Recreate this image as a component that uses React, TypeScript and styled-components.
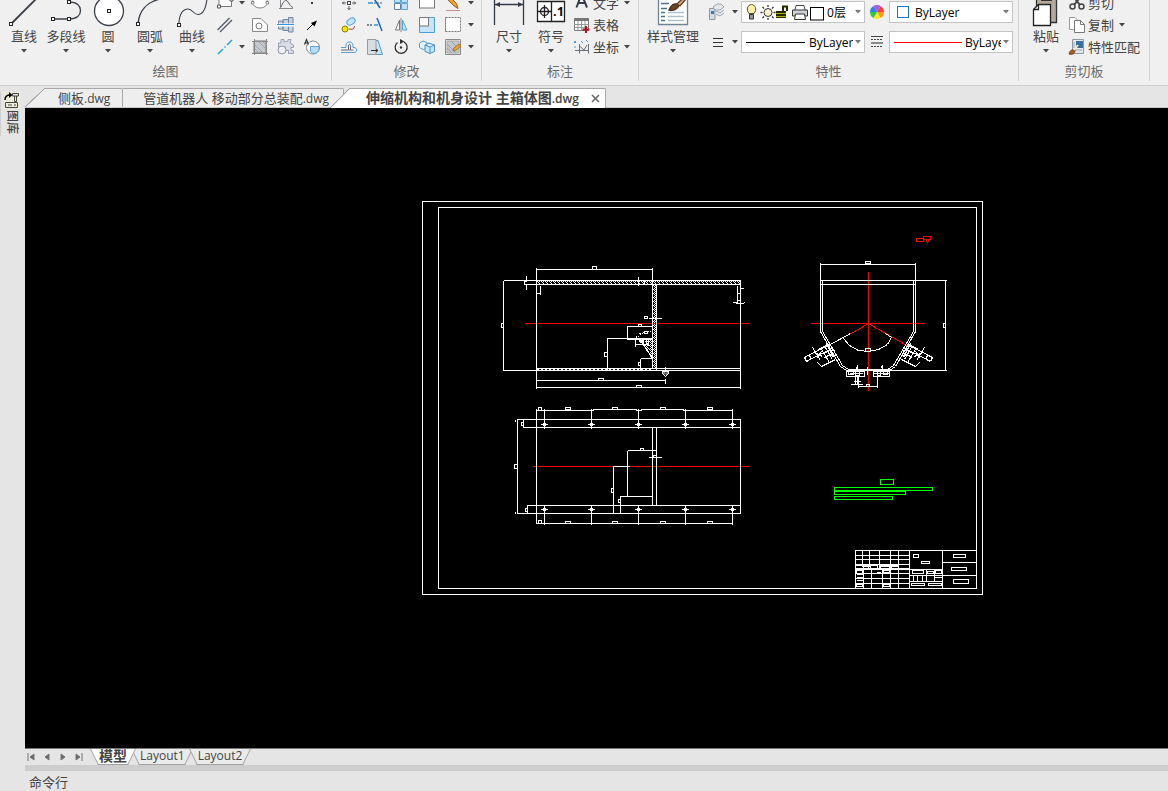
import React from "react";
import styled, { createGlobalStyle, css } from "styled-components";

const GlobalStyle = createGlobalStyle`
  * { box-sizing: border-box; }
  body { margin: 0; background: #e5e5e5; }
  body, button, select, input {
    font-family: "Open Sans", "Noto Sans CJK SC", sans-serif;
    font-size: 13px;
    color: #444;
  }
  button { border: 0; padding: 0; background: none; }
  svg { display: block; flex: none; }
`;

/* ---------- page frame ---------- */

const Page = styled.div`
  display: flex;
  flex-direction: column;
  min-height: 100vh;
`;

const Ribbon = styled.header`
  display: flex;
  padding-bottom: 4px;
  background: #f0f0f0;
  border-bottom: 1px solid #cfcfcf;
  overflow: hidden;
`;

const GroupBox = styled.section`
  display: flex;
  flex-direction: column;
  flex: none;
  border-right: 1px solid #d2d2d2;
`;

const GroupBody = styled.div<{ $left: number; $right: number }>`
  display: flex;
  height: 63px;
  padding: 0 ${(p) => p.$right}px 0 ${(p) => p.$left}px;
`;

const GroupTitle = styled.h2`
  margin: 0;
  padding-bottom: 2px;
  font-size: 13px;
  font-weight: 400;
  line-height: 16px;
  text-align: center;
  color: #6a6a6a;
`;

const BigButton = styled.button<{ $wide?: boolean }>`
  display: flex;
  flex-direction: column;
  align-items: center;
  width: ${(p) => (p.$wide ? 60 : 42)}px;
  height: 58px;
  line-height: 18px;
  white-space: nowrap;
`;

const CaretBox = styled.span`
  display: flex;
  align-items: center;
  justify-content: center;
  width: 10px;
  height: 12px;
`;

const ToolGrid = styled.div<{ $cols: string }>`
  display: grid;
  grid-template-columns: ${(p) => p.$cols};
  grid-auto-rows: 22px;
  align-items: center;
  margin-top: -8px;
`;

const ToolButton = styled.button`
  display: flex;
  align-items: center;
  justify-content: center;
  height: 22px;
`;

const ToolList = styled.div`
  display: flex;
  flex-direction: column;
  margin-top: -8px;
  padding-left: 1px;
`;

const ToolRow = styled.button`
  display: flex;
  align-items: center;
  gap: 2px;
  height: 22px;
  line-height: 22px;
  white-space: nowrap;
`;

const RowCaret = styled.span`
  padding-left: 1px;
`;

const PropGrid = styled.div`
  display: grid;
  grid-template-columns: 26px 12px 124px 24px 124px;
  grid-auto-rows: 22px;
  row-gap: 8px;
  align-items: center;
  justify-items: center;
  padding-top: 1px;
`;

const Field = styled.label`
  display: flex;
  align-items: center;
  width: 100%;
  height: 22px;
  padding: 0 1px 0 4px;
  background: #fff;
  border: 1px solid #c3c3c3;
`;

const FieldSelect = styled.select`
  flex: 1;
  min-width: 0;
  height: 20px;
  padding: 0;
  margin-left: 3px;
  border: 0;
  appearance: none;
  background: none;
  font-size: 12px;
  color: #000;
`;

const Workspace = styled.div`
  display: flex;
  flex: 1;
`;

const Sidebar = styled.aside`
  width: 25px;
  flex: none;
  padding-top: 6px;
`;

const SideTab = styled.button`
  display: flex;
  flex-direction: column;
  align-items: center;
  gap: 1px;
  width: 23px;
  height: 44px;
  border-left: 1px solid #cfcfcf;
`;

const SideLabel = styled.span`
  writing-mode: vertical-rl;
  text-orientation: sideways;
  font-size: 12px;
  font-weight: 500;
  line-height: 16px;
`;

const Main = styled.main`
  display: flex;
  flex-direction: column;
  flex: 1;
  min-width: 0;
`;

/* ---------- document tabs ---------- */

const FileTabs = styled.nav`
  display: flex;
  align-items: flex-end;
  height: 22px;
  border-bottom: 1px solid #c8c8c8;
`;

const FileTab = styled.div<{ $active?: boolean; $slant?: boolean; $left: number; $right: number }>`
  --fill: ${(p) => (p.$active ? "#fff" : "#eee")};
  position: relative;
  display: flex;
  align-items: center;
  height: 19px;
  margin-left: ${(p) => (p.$active ? 6 : p.$slant ? 20 : 0)}px;
  padding: 0 ${(p) => p.$right}px 0 ${(p) => p.$left}px;
  background: var(--fill);
  border-top: 1px solid #a8a8a8;
  border-right: 1px solid #a8a8a8;
  border-top-right-radius: 2px;
  white-space: nowrap;
  ${(p) =>
    p.$active &&
    css`
      height: 20px;
      margin-bottom: -1px;
    `}
  ${(p) =>
    p.$slant &&
    css`
      &::before {
        content: "";
        position: absolute;
        right: 100%;
        top: -1px;
        bottom: 0;
        width: 20px;
        background: linear-gradient(to bottom right, transparent 48%, #a0a0a0 49%, #a0a0a0 51%, var(--fill) 53%);
      }
    `}
`;

const FileName = styled.button<{ $active?: boolean }>`
  font-size: ${(p) => (p.$active ? 14 : 13)}px;
  font-weight: ${(p) => (p.$active ? 700 : 400)};
  line-height: 18px;
`;

const Extension = styled.span<{ $active?: boolean }>`
  font-size: 12px;
  font-weight: ${(p) => (p.$active ? 600 : 400)};
`;

const CloseButton = styled.button`
  margin-left: 12px;
`;

/* ---------- drawing area and bottom bars ---------- */

const Canvas = styled.div`
  flex: 1;
  padding: 93px 0 0 397px;
  background: #000;
  overflow: hidden;
`;

const LayoutBar = styled.nav`
  display: flex;
  align-items: flex-start;
  height: 17px;
  border-top: 1px solid #777;
`;

const NavButton = styled.button`
  display: flex;
  align-items: center;
  width: 16px;
  height: 16px;
  padding-left: 2px;
`;

const LayoutTab = styled.button<{ $active?: boolean }>`
  --fill: ${(p) => (p.$active ? "#fff" : "#ebebeb")};
  position: relative;
  z-index: ${(p) => (p.$active ? 1 : 0)};
  height: 16px;
  padding: 0 7px 2px;
  line-height: 14px;
  margin-right: -1px;
  font-size: ${(p) => (p.$active ? 14 : 12)}px;
  font-weight: ${(p) => (p.$active ? 700 : 400)};
  &::before,
  &::after {
    content: "";
    position: absolute;
    z-index: -1;
    top: 0;
    bottom: 0;
    background: var(--fill);
    border-bottom: 1px solid #a0a0a0;
  }
  &::before {
    left: 2px;
    right: 40%;
    border-left: 1px solid #a0a0a0;
    transform: skewX(26deg);
  }
  &::after {
    left: 40%;
    right: 2px;
    border-right: 1px solid #a0a0a0;
    transform: skewX(-26deg);
  }
`;

const LayoutTabs = styled.div`
  display: flex;
  isolation: isolate;
  padding-left: 3px;
`;

const Splitter = styled.div`
  height: 6px;
  background: #cdcdcd;
`;

const CommandRow = styled.div`
  display: flex;
  align-items: center;
  height: 20px;
  padding-left: 4px;
`;

const CommandInput = styled.input`
  flex: 1;
  height: 18px;
  margin-left: 6px;
  border: 0;
  background: none;
  outline: none;
`;

/* ---------- icons ---------- */

const Caret = ({ color = "#444" }: { color?: string }) => (
  <CaretBox>
    <svg width="6" height="4" viewBox="0 0 6 4"><path d="M0 0H6L3 3.4Z" fill={color} /></svg>
  </CaretBox>
);

const Small = ({ children }: { children: React.ReactNode }) => (
  <svg width="18" height="20" viewBox="1 0 18 20" fill="none" stroke="#555c68">{children}</svg>
);

const Big = ({ children, w = 42 }: { children: React.ReactNode; w?: number }) => (
  <svg width={w} height="27" viewBox={`0 0 ${w} 27`} fill="none" stroke="#3a3f4a" strokeWidth="1.3">{children}</svg>
);

const Grip = ({ x, y }: { x: number; y: number }) => (
  <rect x={x - 1.5} y={y - 1.5} width="3" height="3" fill="#fff" stroke="#222" strokeWidth="1" />
);

const drawButtons = [
  { label: "直线", icon: <><path d="M8 24L33-1" strokeWidth="1.8" /><Grip x={8} y={24} /></> },
  { label: "多段线", icon: <><path d="M8 19H24C32 19 35.500 15 35.500 10.500S32 2 24 2" /><Grip x={8} y={19} /><Grip x={24} y={19} /><Grip x={24} y={2} /></> },
  { label: "圆", icon: <><circle cx="22" cy="11" r="14.500" fill="#fff" /><Grip x={22} y={11} /></> },
  { label: "圆弧", icon: <><path d="M9 24C10 11 18 2 31-1" strokeWidth="1.400" /><Grip x={9} y={24} /></> },
  { label: "曲线", icon: <><path d="M8 24C8 14 12 9 17 9C22 9 22 14.500 27 14.500C33 14.500 35 7 36-1" strokeWidth="1.100" /><Grip x={8} y={25} /></> },
];

const drawTools: { name: string; icon: React.ReactNode; caret?: boolean }[][] = [
  [
    { name: "矩形", caret: true, icon: <><path d="M4 1H16.500V13.500H4Z" fill="#fff" stroke="#777" /><path d="M2.500 12H5.500V15H2.500ZM15 5H18V8H15Z" fill="#fff" stroke="#555" /></> },
    { name: "椭圆", icon: <><ellipse cx="10" cy="9.500" rx="7.500" ry="5.500" fill="#fff" stroke="#888" /><path d="M1.500 8.500H4V11H1.500ZM16 8.500H18.500V11H16Z" fill="#fff" stroke="#888" /></> },
    { name: "函数", icon: <><path d="M4.500 2V15.500M3 15.500H17" stroke="#888" /><path d="M5 14C8 7 10 6 12 9S14 13 17 14.500" /></> },
    { name: "点", icon: <rect x="9" y="9" width="2" height="2" fill="#333" stroke="none" /> },
  ],
  [
    { name: "平行线", icon: <path d="M2.500 15L14.500 3M5 17L17 5" strokeWidth="1.400" /> },
    { name: "轮廓", icon: <><path d="M2.500 3.500H11L17.500 10V16.500H2.500Z" fill="#fff" stroke="#888" /><circle cx="9" cy="11" r="3" stroke="#777" /></> },
    { name: "轴", icon: <><path d="M2.500 6H7V14H2.500ZM7 4.500H12.500V15.500H7ZM12.500 2.500H17V17H12.500Z" fill="#c5cfdc" stroke="#7588a0" /><path d="M2 8.500H18V11.500H2Z" fill="#fff" stroke="none" /><path d="M1 9.500H18" stroke="#2f95e8" /></> },
    { name: "箭头", icon: <><path d="M5 15L11 9" stroke="#000" /><path d="M9 8L15 5.500L12.500 11.500Z" stroke="none" fill="#000" /></> },
  ],
  [
    { name: "中心线", caret: true, icon: <path d="M3 17L8 12M9.500 10.500L10.500 9.500M12 8L17 3" stroke="#2aa3e6" strokeWidth="1.500" /> },
    { name: "图案填充", icon: <><path d="M4 4H16V16H4Z" fill="#c6cace" stroke="#777" /><path d="M4 7L13 16M4 11L9 16M8 4L16 12M12 4L16 8" stroke="#a0a8b0" /><path d="M2 4.500H18M2 16.500H18M4.500 2V18M16.500 2V18" stroke="#888" /></> },
    { name: "零件", icon: <><path d="M5 2.500H8V5L12 4V2.500H15L14 6L17.500 8V10.500H15V13L17.500 14V16.500H12.500V13.500H9.500V10H2.500V6H5Z" fill="#d9dee6" stroke="#9aa3b0" /><circle cx="6" cy="13" r="4" fill="#eef0f3" stroke="#8d96a3" /></> },
    { name: "局部放大", icon: <><circle cx="11" cy="10.500" r="6.500" fill="#fff" stroke="#888" /><path d="M8.500 9.500H17V12C17 14 15 16.500 12 16.500C9.500 16.500 8.500 15 8.500 13Z" fill="#b5dcf8" stroke="#5ba3d8" /><path d="M2.500 7.500L4.500 2.500L6.500 7.500M3 6H6" stroke="#333" strokeWidth="1.200" /></> },
  ],
];

const modifyTools: { name: string; icon: React.ReactNode }[][] = [
  [
    { name: "移动", icon: <><path d="M10 3V17M3 10H17M8.500 15L10 16.500L11.500 15M5 8.500L3.500 10L5 11.500M15 8.500L16.500 10L15 11.500" /><path d="M7 7H13V13H7Z" fill="#f0f0f0" stroke="none" /><rect x="8.500" y="8.500" width="3" height="3" fill="#f0f0f0" stroke="#444" /></> },
    { name: "修剪", icon: <><path d="M3 10H8" stroke="#2f95e8" strokeWidth="1.500" /><path d="M9 10H18" strokeDasharray="2 1" /><path d="M8 4L15 15" stroke="#1668b0" strokeWidth="1.500" /></> },
    { name: "阵列", icon: <><path d="M3.500 3.500H9.500V9.500H3.500ZM10.500 3.500H16.500V9.500H10.500ZM10.500 10.500H16.500V16.500H10.500Z" fill="#bfe3fa" stroke="#5aa6d6" /><path d="M3.500 10.500H9.500V16.500H3.500Z" fill="#fff" stroke="#5a86a6" /></> },
    { name: "面", icon: <rect x="2.500" y="1" width="15" height="14" fill="#fff" stroke="#777" /> },
    { name: "编辑", icon: <><path d="M3 5L11 13L15 15.500L13.500 10.500L6 3Z" fill="#f0a030" stroke="#9a6520" /><path d="M3 17.500H17" stroke="#c58c88" /></> },
  ],
  [
    { name: "复制", icon: <><circle cx="6" cy="14" r="3" fill="#f5e600" stroke="#8a8000" /><ellipse cx="12" cy="6.500" rx="4.500" ry="3" transform="rotate(-35 12 6.500)" fill="#c9e7fa" stroke="#4c9fd6" /><path d="M10 14C15 15 15 13 15.500 11" stroke="#b03030" /></> },
    { name: "打断", icon: <><path d="M2 10H8" strokeDasharray="2 1" strokeWidth="1.500" /><path d="M9 10H13" stroke="#2f95e8" strokeWidth="1.500" /><path d="M12 3L17 16" stroke="#1668b0" strokeWidth="1.500" /></> },
    { name: "镜像", icon: <><path d="M8.500 5V15H4.500Z" fill="#fff" stroke="#777" /><path d="M11.500 5V15H16Z" fill="#bfe3fa" stroke="#5aa6d6" /><path d="M10 3V17" stroke="#888" /></> },
    { name: "缩放", icon: <><path d="M2.500 2.500H17.500V17.500H2.500Z" fill="#c5e5fa" stroke="#4c9fd6" /><path d="M2.500 2.500H11.500V11H2.500Z" fill="#fff" stroke="#777" /></> },
    { name: "选择框", icon: <><rect x="2.500" y="2.500" width="15" height="14" fill="#fff" stroke="#777" strokeDasharray="2 1" /><path d="M2.500 3V17" stroke="#4c9fd6" strokeDasharray="2 1" /></> },
  ],
  [
    { name: "偏移", icon: <><path d="M2 15.500H15C18.500 15.500 18.500 10.500 15 10.500H14V8C14 4 7 4 7 8V10.500H2" stroke="#5d9ed0" /><path d="M2 13H14.500M9.500 12.500V8.500C9.500 7 11.500 7 11.500 8.500V12.500" stroke="#667" /></> },
    { name: "拉伸", icon: <><path d="M10 3.500L13 3.500L17.500 17.500H10" fill="#c5e5fa" stroke="#4c9fd6" /><path d="M2.500 2.500H11V17.500H2.500Z" fill="#d9dce0" stroke="#999" /><path d="M6 13.500H13M11 12L13 13.500L11 15" stroke="#333" /></> },
    { name: "旋转", icon: <><path d="M6.500 5.500A6 6 0 1 0 13 5" stroke="#333" strokeWidth="1.300" /><path d="M9 2L13.500 4.500L9 7Z" fill="#333" stroke="none" /><circle cx="10" cy="10.500" r="1.200" fill="#333" stroke="none" /></> },
    { name: "三维阵列", icon: <><path d="M2.500 6L6 4L10 5.500V11L6 12.500L2.500 10.500Z" fill="#e3f2fc" stroke="#5a9fce" /><path d="M8 8L12 6L17.500 8V14.500L13 16.500L8 14.500ZM8 8L13 10L17.500 8M13 10V16.500" fill="#c5e5fa" stroke="#4c8fc6" /></> },
    { name: "编辑填充", icon: <><path d="M4 4H16V16H4Z" fill="#c3c6ca" stroke="#aaa" /><path d="M4 7L13 16M4 11L9 16M8 4L16 12" stroke="#9aa0a8" /><path d="M2.500 2.500H17.500V17.500H2.500Z" stroke="#888" /><path d="M10 14L11 11L16 7L18 9L13 13Z" fill="#eba83a" stroke="#a87522" /></> },
  ],
];

const annotateRows = [
  { label: "文字", caret: true, icon: <path d="M4.500 14.500L9.500 1L15 14.500M6.500 10H13" stroke="#333a48" strokeWidth="2" /> },
  { label: "表格", icon: <><path d="M2.500 3.500H16.500V15.500H2.500Z" fill="#fff" stroke="#777" /><path d="M2.500 3H16.500V6H2.500Z" fill="#777" stroke="none" /><path d="M2.500 9.500H16.500M2.500 12.500H16.500M6 6V15.500M9.500 6V15.500M13 6V15.500" stroke="#999" /><path d="M14 11V18M10.500 14.500H17.500" stroke="#b01020" strokeWidth="2" /></> },
  { label: "坐标", caret: true, icon: <><path d="M7.500 7V16.500M16.500 7V16.500M3 13.500H17M7.500 9L12 13L15 8" stroke="#68707c" /><path d="M2 4L4 6M4 4L2 6M9 4L11 6M14 3L16 5M3 9V11" stroke="#4c9fd6" /></> },
];

const clipboardRows = [
  { label: "剪切", icon: <><path d="M5 2L13 12M15 2L7 12" stroke="#444" strokeWidth="2" /><circle cx="5.500" cy="13.500" r="2.500" stroke="#444" strokeWidth="1.500" /><circle cx="14.500" cy="13.500" r="2.500" stroke="#444" strokeWidth="1.500" /></> },
  { label: "复制", caret: true, icon: <><path d="M2.500 2.500H8L11 5.500V14.500H2.500Z" fill="#fff" stroke="#999" /><path d="M7.500 5.500H13.500L17.500 9.500V17.500H7.500Z" fill="#fff" stroke="#777" /><path d="M13.500 5.500V9.500H17.500" stroke="#777" /></> },
  { label: "特性匹配", icon: <><path d="M5.500 2.500H16.500V16.500H5.500Z" fill="#e5e9ed" stroke="#8999a6" /><path d="M9 4H16V11H9Z" fill="#386f9e" stroke="none" /><path d="M7 13H15M7 5V11" stroke="#9aabbb" /><path d="M2 17C3 12 6 13 8 13C8 17 5 18 2 17Z" fill="#a75b1c" stroke="#7d4819" /><path d="M7 13L11 8" stroke="#f3e5d2" strokeWidth="2" /></> },
];

/* ---------- ribbon parts ---------- */

const Group = ({ title, left, right, children }: { title: string; left: number; right: number; children: React.ReactNode }) => (
  <GroupBox>
    <GroupBody $left={left} $right={right}>{children}</GroupBody>
    <GroupTitle>{title}</GroupTitle>
  </GroupBox>
);

const BigTool = ({ label, wide, children }: { label: string; wide?: boolean; children: React.ReactNode }) => (
  <BigButton $wide={wide}>
    <Big w={wide ? 60 : 42}>{children}</Big>
    {label}
    <Caret />
  </BigButton>
);

const RowTool = ({ label, caret, icon }: { label: string; caret?: boolean; icon: React.ReactNode }) => (
  <ToolRow>
    <Small>{icon}</Small>
    {label}
    {caret && <RowCaret><Caret /></RowCaret>}
  </ToolRow>
);

const LayerIcons = () => (
  <svg width="78" height="18" viewBox="0 0 78 18" fill="none">
    <path d="M3 10.500C-.5 6.500 2 1.500 5.500 1.500S11.500 6.500 8 10.500Z" fill="#ffefa8" stroke="#554a28" />
    <path d="M3.500 11.500H7.500V16H3.500Z" fill="#999" stroke="#333" />
    <circle cx="22" cy="9.500" r="4" fill="#fff3cf" stroke="#333" />
    <path d="M22 2V4M22 15V17M14.500 9.500H16.500M27.500 9.500H29.500M16.500 4L18 5.500M26 13.500L27.500 15M27.500 4L26 5.500M18 13.500L16.500 15" stroke="#333" strokeWidth="1.300" />
    <path d="M30 8H40V15H30Z" fill="#262800" /><path d="M30 10.500H40M30 13.500H40" stroke="#aab000" />
    <path d="M37 8V3.500H41V8" stroke="#262800" strokeWidth="2" />
    <path d="M49 7L50 2.500H58L59 7" fill="#fff" stroke="#444" />
    <path d="M46.500 7H61.500V13H46.500Z" fill="#cfd3d8" stroke="#333" /><path d="M49.500 11H58.500L59.500 16.500H48.500Z" fill="#fff" stroke="#333" />
    <rect x="64.500" y="4.500" width="13" height="12.500" fill="#fff" stroke="#000" />
  </svg>
);

const wheel = ["#a060e8", "#ff4030", "#ff9a20", "#ffe820", "#30c840", "#3080f0"];

const ColorWheel = () => (
  <svg width="14" height="14" viewBox="-7 -7 14 14">
    {wheel.map((c, i) => (
      <path key={c} d="M0 0L-3.500-6.060A7 7 0 0 1 3.500-6.060Z" fill={c} transform={`rotate(${i * 60})`} />
    ))}
  </svg>
);

/* ---------- engineering drawing ---------- */

type Box = [number, number, number, number];

const Boxes = ({ list }: { list: Box[] }) => (
  <path d={list.map(([x1, y1, x2, y2]) => `M${x1} ${y1}H${x2}V${y2}H${x1}Z`).join("")} />
);

const holes = [544, 591, 638, 685, 732];
const dimMarks = [565, 612, 660, 707];

const Probe = () => (
  <>
    <path d="M804 357L829 344M806 361L833 347M804 357L806 361M809 355L811 359M812 347L820 360M817 362L821 366L835 359M821 349L829 362M825 347L832 359" />
    <path d="M814 352L822 356M816 358L821 351M823 353L831 349M824 357L832 353M818 349L826 345" />
    <path d="M826 343L833 357M829 350H834M827 355H836" />
  </>
);

const Drawing = () => (
  <svg width="562" height="395" viewBox="422 201 562 395" role="img" aria-label="主箱体图">
    <defs>
      <pattern id="hatch" width="4" height="4" patternUnits="userSpaceOnUse">
        <path d="M0 0h1v1h-1zM1 1h1v1h-1zM2 2h1v1h-1zM3 3h1v1h-1zM2 0h1v1h-1zM3 1h1v1h-1z" fill="#fff" />
      </pattern>
    </defs>
    <g shapeRendering="crispEdges">
      <rect x="537" y="281" width="203" height="3" fill="url(#hatch)" />
      <rect x="653" y="284" width="3" height="85" fill="url(#hatch)" />
      <path d="M641 342L652 338V359Z" fill="url(#hatch)" />
      <path d="M537 369.500H652" stroke="#fff" strokeDasharray="2 2" />
    </g>
    <g transform="translate(0.5 0.5)" fill="none" stroke="#fff" shapeRendering="crispEdges">
      {/* sheet border */}
      <Boxes list={[[422, 201, 982, 594], [438, 207, 976, 588]]} />

      {/* centre lines */}
      <path stroke="#f00" d="M524 323H748M532 466H748M810 323H924M868 271V390M868 323L849 334M868 323L908 346" />

      {/* front section */}
      <path d="M536 269H652M536 267V388M652 267V368M656 284V369M503 280H740M536 284H740M503 280V370H740M536 368H740M740 280V388" />
      <path d="M526 275V279M526 284V289M523 281H526M524 281V284H536M540 285V294M536 293H540M638 276V285M644 280V284" />
      <path d="M737 285V302M740 288H743M737 293H740M737 300H740M732 302H735L737 303H742L745 302M648 318H661" />
      <path d="M627 325V339H652M627 326H652M606 338H652M607 338V369M635 337V346M635 344H648M648 338V345M639 338L652 358M640 358H652M640 358V369" />
      <path d="M637 337L641 333L646 331H650" strokeDasharray="2 1" />
      <path d="M636 335V339M638 333H640M643 342L640 345M646 340V343" />
      <path d="M536 380H665M665 378V383M536 387H740M665 366V370" />
      <path d="M662 371H668V373L665 376L662 373Z" fill="url(#hatch)" />
      <path d="M639 340H643V342H640Z" fill="#fff" />
      <Boxes list={[[592, 266, 596, 269], [501, 323, 503, 327], [644, 316, 647, 318], [638, 324, 641, 326], [644, 331, 647, 333], [604, 352, 607, 356], [638, 362, 640, 365], [598, 378, 603, 380], [636, 385, 641, 387]]} />

      {/* plan view */}
      <path d="M536 408V523M536 410H593V409H636V410H641V409H683V410H732M516 419H740M523 427H740M526 505H740M516 513H740M740 419V513M517 419V513M523 419V427M527 505V513M536 523H732M652 427V505M656 427V505" />
      <path d="M627 450V496M627 450H655M648 457H661M612 466H629M613 466V513M619 496H652M620 496V513" />
      {holes.map((x) => (
        <g key={x}>
          <path d={`M${x} 408V428M${x} 505V524M${x - 4} 424H${x + 3}M${x - 4} 509H${x + 3}`} />
          <path fill="#fff" d={`M${x - 2} 424L${x} 422L${x + 2} 424L${x} 426ZM${x - 2} 509L${x} 507L${x + 2} 509L${x} 511Z`} />
          <path d={`M${x - 1} 423H${x + 1}V425H${x - 1}ZM${x - 1} 508H${x + 1}V510H${x - 1}Z`} />
        </g>
      ))}
      <Boxes list={dimMarks.flatMap((x): Box[] => [[x, 407, x + 5, 409], [x, 521, x + 5, 523]])} />
      <Boxes list={[[538, 407, 541, 410], [538, 520, 541, 523], [514, 464, 517, 468], [521, 422, 523, 425], [525, 508, 527, 511], [640, 448, 643, 450], [653, 455, 656, 457], [611, 488, 613, 492], [618, 499, 620, 502]]} />
      <path d="M515 419V421M515 513V511" />

      {/* end view */}
      <path d="M820 264H915M820 262V331L840 366L846 370M915 262V331L895 366L889 370M822 280V331L842 365L848 369M913 280V331L893 365L887 369M820 280H946M820 284H915M945 280V370M845 370H946M847 369H889" />
      <path d="M850 333L828 345M843 338L849 345L858 350L868 351L878 349L887 344L891 337L885 333" />
      <Probe />
      <g transform="translate(1736 0) scale(-1 1)"><Probe /></g>
      <path d="M855 376V384M857 376V384M850 384H862M853 381H860M858 376V387M877 376V387M858 386H877M857 364V370M882 364V370M867 366V374M849 373H862M873 373H888M857 366L855 370M881 366L883 370" />
      <Boxes list={[[865, 261, 870, 263], [943, 323, 945, 327], [865, 348, 870, 351], [866, 384, 869, 386], [846, 371, 864, 376], [873, 371, 889, 376], [848, 371, 853, 374], [855, 371, 859, 375], [877, 371, 880, 375], [883, 371, 887, 374]]} />

      {/* section mark and technical notes */}
      <g stroke="#f00"><Boxes list={[[916, 238, 923, 241], [923, 236, 930, 239]]} /><path d="M925 239L927 242L929 239M923 236H931" /></g>
      <g stroke="#0f0"><Boxes list={[[880, 479, 893, 484], [834, 487, 932, 490], [834, 491, 905, 494], [834, 496, 892, 499]]} /></g>

      {/* title block */}
      <path d="M855 588V550H976M909 550V588M942 550V588M862 550V566M869 550V566M879 550V569M890 550V588M898 550V588M855 555H909M855 559H909M855 564H909M855 569H942M863 569V588M871 569V588M882 569V588M855 573H909M855 578H909M855 583H909M909 575H976M909 581H942M942 562H976M913 575V581M917 575V581M922 575V581M926 569V581M934 569V581M934 577H942M934 573H942" />
      <path d="M855 565H868M855 568H909M880 566H898M856 574H862M856 577H862M856 580H862M876 572H880" />
      <Boxes list={[[870, 565, 877, 568], [863, 566, 868, 568], [880, 565, 889, 568], [891, 565, 898, 568], [883, 570, 889, 572], [856, 570, 862, 573], [856, 584, 862, 586], [883, 584, 889, 586], [913, 554, 918, 557], [921, 561, 929, 563], [912, 570, 923, 573], [927, 571, 933, 573], [935, 570, 941, 573], [911, 583, 924, 585], [928, 583, 941, 585], [953, 554, 965, 557], [951, 567, 966, 570], [953, 579, 968, 583]]} />
    </g>
  </svg>
);

/* ---------- application ---------- */

const navIcons = [
  { name: "第一个", d: "M1 0V8M7 1V7L3 4Z" },
  { name: "上一个", d: "M6 1V7L2 4Z" },
  { name: "下一个", d: "M2 1V7L6 4Z" },
  { name: "最后一个", d: "M1 1V7L5 4ZM7 0V8" },
];

export default function App() {
  return (
    <Page>
      <GlobalStyle />
      <Ribbon>
        <Group title="绘图" left={3} right={6}>
          {drawButtons.map((b) => <BigTool key={b.label} label={b.label}>{b.icon}</BigTool>)}
          <ToolGrid $cols="24px 10px repeat(3, 26px)">
            {drawTools.map((row) =>
              row.map((t, i) => (
                <React.Fragment key={t.name}>
                  <ToolButton aria-label={t.name}><Small>{t.icon}</Small></ToolButton>
                  {i === 0 && (t.caret ? <Caret /> : <span />)}
                </React.Fragment>
              ))
            )}
          </ToolGrid>
        </Group>
        <Group title="修改" left={4} right={5}>
          <ToolGrid $cols="repeat(5, 26px) 10px">
            {modifyTools.map((row, r) => (
              <React.Fragment key={r}>
                {row.map((t) => <ToolButton key={t.name} aria-label={t.name}><Small>{t.icon}</Small></ToolButton>)}
                <Caret />
              </React.Fragment>
            ))}
          </ToolGrid>
        </Group>
        <Group title="标注" left={6} right={6}>
          <BigTool label="尺寸"><path d="M6.500 0V25M35.500 0V25M7 4.500H35" stroke="#333a48" /><path d="M7 4.500L12 2V7ZM35 4.500L30 2V7Z" fill="#333a48" stroke="none" /></BigTool>
          <BigTool label="符号">
            <path d="M7.500 1.500H34.500V21.500H7.500ZM21.500 1V22" fill="#fff" stroke="#222" />
            <circle cx="14.500" cy="11.500" r="4" stroke="#222" /><path d="M14.500 5V18M8 11.500H21" stroke="#222" />
            <text x="23" y="16" fontSize="13" fontWeight="700" fill="#111" stroke="none">.1</text>
          </BigTool>
          <ToolList>{annotateRows.map((r) => <RowTool key={r.label} {...r} />)}</ToolList>
        </Group>
        <Group title="特性" left={4} right={5}>
          <BigTool label="样式管理" wide>
            <path d="M15.500 0V24.500H44.500V0" fill="#fff" stroke="#6e8497" />
            <path d="M18 3.500H26M18 8.500H24M18 12.500H22M18 16.500H22M18 20.500H22" stroke="#4f7190" />
            <path d="M25 12.500H41M25 16.500H41M25 20.500H41" stroke="#aebfce" />
            <path d="M26 10C29 3 33 3 36 5C35 9 31 11 26 10Z" fill="#6a4426" stroke="#4a2e18" />
            <path d="M34 4L40-2L43-1L37 6Z" fill="#d8a878" stroke="#5a3b22" />
          </BigTool>
          <PropGrid>
            <ToolButton aria-label="图层">
              <Small><path d="M3.500 6.500H9V17.500H3.500Z" fill="#d4dbe2" stroke="#8a98a5" /><path d="M5 9H8V12H5Z" fill="#3878b0" stroke="none" /><path d="M7 5L11 2H15L18 5L14 8H9ZM10 9L14 11L18 8M10 12L14 14L18 11" fill="#e5e8eb" stroke="#9aa4ad" /></Small>
            </ToolButton>
            <Caret />
            <Field>
              <LayerIcons />
              <FieldSelect aria-label="图层"><option>0层</option></FieldSelect>
              <Caret color="#777" />
            </Field>
            <ColorWheel />
            <Field>
              <svg width="18" height="14" viewBox="0 0 18 14"><rect x="3.500" y="1.500" width="11" height="11" fill="#fff" stroke="#1874d0" /></svg>
              <FieldSelect aria-label="颜色"><option>ByLayer</option></FieldSelect>
              <Caret color="#777" />
            </Field>
            <ToolButton aria-label="线宽"><Small><path d="M7 6.500H17M7 10.500H17M7 14.500H17" stroke="#333" /></Small></ToolButton>
            <Caret />
            <Field>
              <svg width="60" height="3" viewBox="0 0 60 3"><path d="M0 1.500H59" stroke="#000" /></svg>
              <FieldSelect aria-label="线型"><option>ByLayer</option></FieldSelect>
              <Caret color="#777" />
            </Field>
            <svg width="12" height="12" viewBox="0 0 12 12" fill="none" stroke="#444"><path d="M0 .500H12" /><path d="M0 3.500H12M0 10.500H12" strokeDasharray="2 1" /><path d="M0 7H12" strokeWidth="2" stroke="#888" /></svg>
            <Field>
              <svg width="68" height="3" viewBox="3 0 68 3"><path d="M0 1.500H71" stroke="#f00" /></svg>
              <FieldSelect aria-label="线宽"><option>ByLayer</option></FieldSelect>
              <Caret color="#777" />
            </Field>
          </PropGrid>
        </Group>
        <Group title="剪切板" left={6} right={9}>
          <BigTool label="粘贴">
            <path d="M11.500-1H31.500V22.500H11.500Z" fill="#b5aa9b" stroke="#333" />
            <path d="M16 0H27" strokeWidth="2" stroke="#333" />
            <path d="M8.500 9.500L13.500 4.500H25.500V25.500H8.500Z" fill="#fff" stroke="#222" /><path d="M8.500 9.500H13.500V4.500" stroke="#222" />
          </BigTool>
          <ToolList>{clipboardRows.map((r) => <RowTool key={r.label} {...r} />)}</ToolList>
        </Group>
      </Ribbon>

      <Workspace>
        <Sidebar>
          <SideTab>
            <svg width="16" height="17" viewBox="0 0 16 17" fill="none" stroke="#444">
              <path d="M0 0H16V17H0Z" fill="#eeeed8" stroke="none" />
              <path d="M1 8C1 4 3 3 6 3" stroke="#000" strokeWidth="1.500" /><path d="M5 0L8.500 3L5 6Z" fill="#000" stroke="none" />
              <path d="M8.500 1.500H14.500V4H8.500ZM10.500 4V9.500H12.500V4M1.500 10.500H13.500V15.500H1.500ZM4 13H8M10 13H12" />
            </svg>
            <SideLabel>图库</SideLabel>
          </SideTab>
        </Sidebar>
        <Main>
          <FileTabs>
            <FileTab $slant $left={13} $right={12}>
              <FileName>侧板<Extension>.dwg</Extension></FileName>
            </FileTab>
            <FileTab $left={20} $right={14}>
              <FileName>管道机器人 移动部分总装配<Extension>.dwg</Extension></FileName>
            </FileTab>
            <FileTab $active $slant $left={16} $right={5}>
              <FileName $active>伸缩机构和机身设计 主箱体图<Extension $active>.dwg</Extension></FileName>
              <CloseButton aria-label="关闭">
                <svg width="9" height="9" viewBox="0 0 9 9"><path d="M1 1L8 8M8 1L1 8" stroke="#666" strokeWidth="1.500" /></svg>
              </CloseButton>
            </FileTab>
          </FileTabs>
          <Canvas><Drawing /></Canvas>
          <LayoutBar>
            {navIcons.map((n) => (
              <NavButton key={n.name} aria-label={n.name}>
                <svg width="8" height="8" viewBox="0 0 8 8"><path d={n.d} fill="#666" stroke="#777" /></svg>
              </NavButton>
            ))}
            <LayoutTabs>
              <LayoutTab $active>模型</LayoutTab>
              <LayoutTab>Layout1</LayoutTab>
              <LayoutTab>Layout2</LayoutTab>
            </LayoutTabs>
          </LayoutBar>
          <Splitter />
          <CommandRow>
            <label htmlFor="command">命令行</label>
            <CommandInput id="command" />
          </CommandRow>
        </Main>
      </Workspace>
    </Page>
  );
}
